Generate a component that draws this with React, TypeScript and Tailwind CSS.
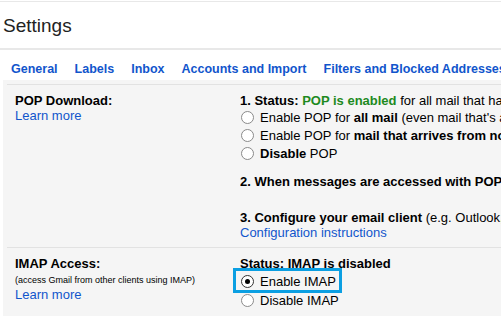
import React from 'react';

function Radio({ checked = false }: { checked?: boolean }) {
  return (
    <span
      className={`w-[13px] h-[13px] rounded-full border bg-white flex items-center justify-center shrink-0 mr-[6px] ${
        checked ? 'border-[#333]' : 'border-[#8a8a8a]'
      }`}
    >
      {checked && <span className="w-[5px] h-[5px] rounded-full bg-black" />}
    </span>
  );
}

function Option({ checked, children }: { checked?: boolean; children: React.ReactNode }) {
  return (
    <div className="h-[18px] flex items-center pl-[1px] whitespace-nowrap">
      <Radio checked={checked} />
      <span>{children}</span>
    </div>
  );
}

const tabs = ['General', 'Labels', 'Inbox', 'Accounts and Import', 'Filters and Blocked Addresses', 'Forwarding and POP/IMAP'];

export default function App() {
  return (
    <div className="w-[501px] h-[316px] overflow-hidden bg-white flex flex-col font-['Liberation_Sans',Arial,sans-serif] text-[13px] leading-[15px] text-[#222]">
      {/* Header */}
      <div className="mt-[1px] h-[49px] border-t border-b-2 border-[#e8e8e8] pl-[3px] pt-[13px] shrink-0">
        <h1 className="text-[19px] leading-[22px] text-[#222]">Settings</h1>
      </div>

      {/* Tabs */}
      <div className="h-[30px] shrink-0 flex gap-[17px] pl-[11px] pt-[12px] whitespace-nowrap">
        {tabs.map(t => (
          <span key={t} className="font-bold text-[12.5px] text-[#1155cc]">{t}</span>
        ))}
      </div>

      {/* Panel */}
      <div className="flex-1 ml-[3px] bg-[#f5f5f5] pt-[4px] pl-[4px]">
        <div className="border-t border-[#e2e2e2]">
          {/* POP */}
          <div className="grid grid-cols-[233px_1fr] h-[163px] border-b border-[#e2e2e2]">
            <div className="pl-[8px] pt-[8px]">
              <div className="font-bold text-black">POP Download:</div>
              <div className="text-[#1155cc]">Learn more</div>
            </div>
            <div className="pt-[8px] text-black whitespace-nowrap overflow-hidden">
              <div>
                <b>1. Status: </b>
                <b className="text-[#1e8a1e]">POP is enabled</b> for all mail that has arrived since 11/4/20
              </div>
              <Option>
                Enable POP for <b>all mail</b> (even mail that's already been downloaded)
              </Option>
              <Option>
                Enable POP for <b>mail that arrives from now on</b>
              </Option>
              <Option>
                <b>Disable</b> POP
              </Option>
              <div className="mt-[12px]">
                <b>2. When messages are accessed with POP</b> keep Gmail's copy in the Inbox
              </div>
              <div className="mt-[21px]">
                <b>3. Configure your email client</b> (e.g. Outlook, Eudora, Netscape Mail)
              </div>
              <div className="text-[#1155cc]">Configuration instructions</div>
            </div>
          </div>

          {/* IMAP */}
          <div className="grid grid-cols-[233px_1fr]">
            <div className="pl-[8px] pt-[8px]">
              <div className="font-bold text-black">IMAP Access:</div>
              <div className="text-[9px] leading-[12px] mt-[3px] text-black">(access Gmail from other clients using IMAP)</div>
              <div className="text-[#1155cc] mt-[1px]">Learn more</div>
            </div>
            <div className="pt-[8px] text-black whitespace-nowrap">
              <div className="font-bold">Status: IMAP is disabled</div>
              <div className="relative inline-block mt-[1px]">
                <Option checked>Enable IMAP</Option>
                <span className="absolute -left-[7px] -top-[4px] w-[109px] h-[25px] border-[3px] border-[#0b9fe2]" />
              </div>
              <div className="mt-[1px]">
                <Option>Disable IMAP</Option>
              </div>
            </div>
          </div>
        </div>
      </div>
    </div>
  );
}
